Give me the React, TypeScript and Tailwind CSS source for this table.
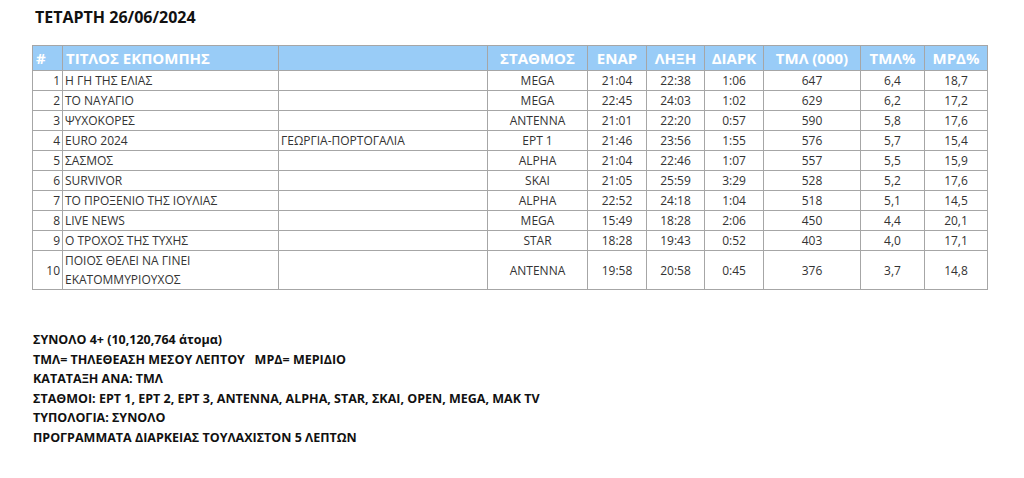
import React from "react";

const rows: [string, string, string, string, string, string, string, string, string, string][] = [
  ["1", "Η ΓΗ ΤΗΣ ΕΛΙΑΣ", "", "MEGA", "21:04", "22:38", "1:06", "647", "6,4", "18,7"],
  ["2", "ΤΟ ΝΑΥΑΓΙΟ", "", "MEGA", "22:45", "24:03", "1:02", "629", "6,2", "17,2"],
  ["3", "ΨΥΧΟΚΟΡΕΣ", "", "ANTENNA", "21:01", "22:20", "0:57", "590", "5,8", "17,6"],
  ["4", "EURO 2024", "ΓΕΩΡΓΙΑ-ΠΟΡΤΟΓΑΛΙΑ", "ΕΡΤ 1", "21:46", "23:56", "1:55", "576", "5,7", "15,4"],
  ["5", "ΣΑΣΜΟΣ", "", "ALPHA", "21:04", "22:46", "1:07", "557", "5,5", "15,9"],
  ["6", "SURVIVOR", "", "SKAI", "21:05", "25:59", "3:29", "528", "5,2", "17,6"],
  ["7", "ΤΟ ΠΡΟΞΕΝΙΟ ΤΗΣ ΙΟΥΛΙΑΣ", "", "ALPHA", "22:52", "24:18", "1:04", "518", "5,1", "14,5"],
  ["8", "LIVE NEWS", "", "MEGA", "15:49", "18:28", "2:06", "450", "4,4", "20,1"],
  ["9", "Ο ΤΡΟΧΟΣ ΤΗΣ ΤΥΧΗΣ", "", "STAR", "18:28", "19:43", "0:52", "403", "4,0", "17,1"],
];

const widths = [30, 216, 209, 100, 59, 58, 59, 97, 64, 63];

export default function App() {
  const td = "border border-[#a6a6a6] px-[2px] py-0 leading-[19px] align-middle";
  const th = "border border-[#a6a6a6] font-bold";
  return (
    <div
      className="w-[1024px] h-[478px] bg-white text-[#333333] overflow-hidden"
      style={{ fontFamily: '"Open Sans", "Noto Sans", sans-serif' }}
    >
      <div className="pl-[35px] pt-[6px] text-[16px] font-bold text-[#111] leading-[22px]">
        ΤΕΤΑΡΤΗ 26/06/2024
      </div>
      <table className="ml-[32px] mt-[17px] border-collapse table-fixed w-[956px] text-[12px]">
        <colgroup>
          {widths.map((w, i) => (
            <col key={i} style={{ width: w }} />
          ))}
        </colgroup>
        <thead>
          <tr className="bg-[#99ccf7] text-white font-bold text-[15px] h-[25px] leading-[20px]">
            <th className={`${th} text-left pl-[3px]`}>#</th>
            <th className={`${th} text-left pl-[3px]`}>ΤΙΤΛΟΣ ΕΚΠΟΜΠΗΣ</th>
            <th className={th}></th>
            <th className={`${th} text-center`}>ΣΤΑΘΜΟΣ</th>
            <th className={`${th} text-center`}>ΕΝΑΡ</th>
            <th className={`${th} text-center`}>ΛΗΞΗ</th>
            <th className={`${th} text-center`}>ΔΙΑΡΚ</th>
            <th className={`${th} text-center`}>ΤΜΛ (000)</th>
            <th className={`${th} text-center`}>ΤΜΛ%</th>
            <th className={`${th} text-center`}>ΜΡΔ%</th>
          </tr>
        </thead>
        <tbody>
          {rows.map((r) => (
            <tr key={r[0]} className="h-[20px]">
              <td className={`${td} text-right`}>{r[0]}</td>
              <td className={`${td} text-left`}>{r[1]}</td>
              <td className={`${td} text-left`}>{r[2]}</td>
              {r.slice(3).map((c, i) => (
                <td key={i} className={`${td} text-center`}>
                  {c}
                </td>
              ))}
            </tr>
          ))}
          <tr className="h-[39px]">
            <td className={`${td} text-right`}>10</td>
            <td className={`${td} text-left leading-[17px]`}>
              ΠΟΙΟΣ ΘΕΛΕΙ ΝΑ ΓΙΝΕΙ
              <br />
              ΕΚΑΤΟΜΜΥΡΙΟΥΧΟΣ
            </td>
            <td className={td}></td>
            {["ANTENNA", "19:58", "20:58", "0:45", "376", "3,7", "14,8"].map((c, i) => (
              <td key={i} className={`${td} text-center`}>
                {c}
              </td>
            ))}
          </tr>
        </tbody>
      </table>
      <div className="pl-[33px] mt-[40px] text-[12.5px] font-bold text-[#111] leading-[19.5px]">
        <div>ΣΥΝΟΛΟ 4+ (10,120,764 άτομα)</div>
        <div className="whitespace-pre">ΤΜΛ= ΤΗΛΕΘΕΑΣΗ ΜΕΣΟΥ ΛΕΠΤΟΥ   ΜΡΔ= ΜΕΡΙΔΙΟ</div>
        <div>ΚΑΤΑΤΑΞΗ ΑΝΑ: ΤΜΛ</div>
        <div>ΣΤΑΘΜΟΙ: ΕΡΤ 1, ΕΡΤ 2, ΕΡΤ 3, ANTENNA, ALPHA, STAR, ΣΚΑΙ, OPEN, MEGA, MAK TV</div>
        <div>ΤΥΠΟΛΟΓΙΑ: ΣΥΝΟΛΟ</div>
        <div>ΠΡΟΓΡΑΜΜΑΤΑ ΔΙΑΡΚΕΙΑΣ ΤΟΥΛΑΧΙΣΤΟΝ 5 ΛΕΠΤΩΝ</div>
      </div>
    </div>
  );
}
